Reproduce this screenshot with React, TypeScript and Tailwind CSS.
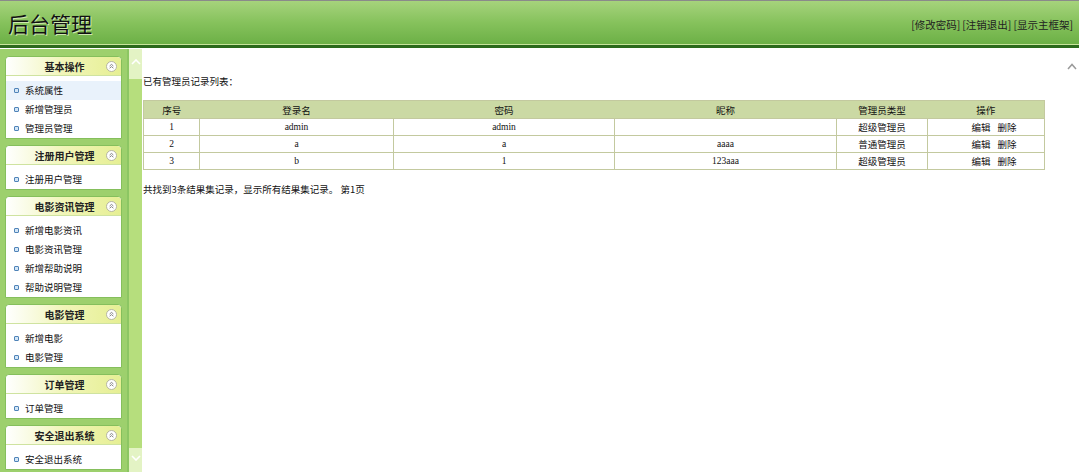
import React from 'react';

const cjk = { fontFamily: '"Noto Sans CJK SC", "Liberation Sans", sans-serif' };
const mixed = { fontFamily: '"Liberation Serif", "Noto Sans CJK SC", serif' };

const menus = [
  { title: '基本操作', items: ['系统属性', '新增管理员', '管理员管理'] },
  { title: '注册用户管理', items: ['注册用户管理'] },
  { title: '电影资讯管理', items: ['新增电影资讯', '电影资讯管理', '新增帮助说明', '帮助说明管理'] },
  { title: '电影管理', items: ['新增电影', '电影管理'] },
  { title: '订单管理', items: ['订单管理'] },
  { title: '安全退出系统', items: ['安全退出系统'] },
];

const rows = [
  { id: '1', login: 'admin', pwd: 'admin', nick: '', type: '超级管理员' },
  { id: '2', login: 'a', pwd: 'a', nick: 'aaaa', type: '普通管理员' },
  { id: '3', login: 'b', pwd: '1', nick: '123aaa', type: '超级管理员' },
];

function CollapseIcon() {
  return (
    <svg width="11" height="11" viewBox="0 0 11 11">
      <circle cx="5.5" cy="5.5" r="5" fill="#fff" stroke="#b5b5a0" />
      <path d="M3.6 5 L5.5 3.4 L7.4 5 M3.6 7.2 L5.5 5.6 L7.4 7.2" fill="none" stroke="#777" strokeWidth="0.9" />
    </svg>
  );
}

function MenuPanel({ title, items, first }: { title: string; items: string[]; first?: boolean }) {
  return (
    <div className="bg-white border border-[#85bf5c] rounded-t-[4px]">
      <div className="h-[19px] flex items-center relative rounded-t-[4px] bg-gradient-to-r from-white via-[#f1f5b8] to-[#e6ef93] border-b border-[#cfe3a0]">
        <span className="flex-1 text-center text-[10px] font-bold text-[#222] pl-[2px]">{title}</span>
        <span className="absolute right-[4px] top-[4px] leading-none">
          <CollapseIcon />
        </span>
      </div>
      <ul className="pt-[5px]">
        {items.map((it, i) => (
          <li
            key={it}
            className={`h-[19px] flex items-center pl-[8px] text-[9.5px] text-[#111] ${first && i === 0 ? 'bg-[#e9f2fb]' : ''}`}
          >
            <span className="w-[5px] h-[5px] border border-[#4f83b8] bg-[#d4e6f6] rounded-[1px] mr-[6px]" />
            {it}
          </li>
        ))}
      </ul>
    </div>
  );
}

export default function App() {
  return (
    <div className="w-[1079px] h-[472px] overflow-hidden flex flex-col bg-white" style={cjk}>
      {/* Header */}
      <div className="h-[49px] shrink-0 flex flex-col">
        <div className="h-[1px] bg-[#8a8a8a]" />
        <div className="h-[44px] flex justify-between bg-gradient-to-b from-[#a6d37c] via-[#86c25c] to-[#6cb046] border-b border-[#c8e49c]">
          <h1 className="self-center pl-[8px] pt-[2px] text-[21px] text-[#111] font-normal [text-shadow:1px_1px_0_#cfe8b0]">后台管理</h1>
          <div className="self-end mb-[11px] pr-[6px] text-[10.5px] text-[#222] flex gap-[2px]">
            <span>[修改密码]</span>
            <span>[注销退出]</span>
            <span>[显示主框架]</span>
          </div>
        </div>
        <div className="h-[3px] bg-[#2b6a1c]" />
        <div className="h-[1px] bg-white" />
      </div>

      <div className="flex-1 flex min-h-0">
        {/* Sidebar */}
        <div className="w-[127px] shrink-0 bg-[#9dd06d] pt-[7px] pl-[5px] pr-[5px] flex flex-col gap-[6px]">
          {menus.map((m, i) => (
            <MenuPanel key={m.title} title={m.title} items={m.items} first={i === 0} />
          ))}
        </div>

        {/* Splitter */}
        <div className="w-[15px] shrink-0 border-l-[2px] border-[#8cc663] bg-[#b6de7d] flex flex-col justify-between">
          <div className="h-[30px] bg-[#e3f3c4] flex items-start justify-center pt-[10px]">
            <svg width="10" height="6" viewBox="0 0 10 6">
              <path d="M1 5 L5 1 L9 5" fill="none" stroke="#fff" strokeWidth="1.6" />
            </svg>
          </div>
          <div className="h-[24px] bg-[#e3f3c4] flex items-start justify-center pt-[7px]">
            <svg width="10" height="6" viewBox="0 0 10 6">
              <path d="M1 1 L5 5 L9 1" fill="none" stroke="#fff" strokeWidth="1.6" />
            </svg>
          </div>
        </div>

        {/* Content */}
        <div className="flex-1 flex min-w-0">
          <div className="flex-1 pl-[1px] pt-[25px] text-[9.5px] text-[#111]">
            <p className="h-[14px] leading-[14px]">已有管理员记录列表：</p>
            <table className="mt-[12px] w-[901px] border-collapse border border-[#c3c99f] table-fixed" style={mixed}>
              <colgroup>
                <col className="w-[56px]" />
                <col className="w-[194px]" />
                <col className="w-[221px]" />
                <col className="w-[222px]" />
                <col className="w-[91px]" />
                <col className="w-[117px]" />
              </colgroup>
              <thead>
                <tr className="h-[18px] bg-[#cbd9a4]" style={cjk}>
                  {['序号', '登录名', '密码', '昵称', '管理员类型', '操作'].map((h) => (
                    <th key={h} className="font-normal text-center leading-[16px] p-0">{h}</th>
                  ))}
                </tr>
              </thead>
              <tbody>
                {rows.map((r) => (
                  <tr key={r.id} className="h-[17px]">
                    <td className="border border-[#c3c99f] text-center leading-[15px] p-0">{r.id}</td>
                    <td className="border border-[#c3c99f] text-center leading-[15px] p-0">{r.login}</td>
                    <td className="border border-[#c3c99f] text-center leading-[15px] p-0">{r.pwd}</td>
                    <td className="border border-[#c3c99f] text-center leading-[15px] p-0">{r.nick}</td>
                    <td className="border border-[#c3c99f] text-center leading-[15px] p-0" style={cjk}>{r.type}</td>
                    <td className="border border-[#c3c99f] leading-[15px] p-0" style={cjk}>
                      <div className="flex justify-center gap-[7px] pl-[16px]">
                        <span>编辑</span>
                        <span>删除</span>
                      </div>
                    </td>
                  </tr>
                ))}
              </tbody>
            </table>
            <p className="mt-[12px] h-[14px] leading-[14px]">共找到3条结果集记录，显示所有结果集记录。 第1页</p>
          </div>
          {/* Scrollbar */}
          <div className="w-[14px] shrink-0 flex flex-col justify-between items-center pt-[14px]">
            <svg width="10" height="7" viewBox="0 0 10 7">
              <path d="M1 6 L5 1.5 L9 6" fill="none" stroke="#9a9a9a" strokeWidth="1.5" />
            </svg>
          </div>
        </div>
      </div>
    </div>
  );
}
